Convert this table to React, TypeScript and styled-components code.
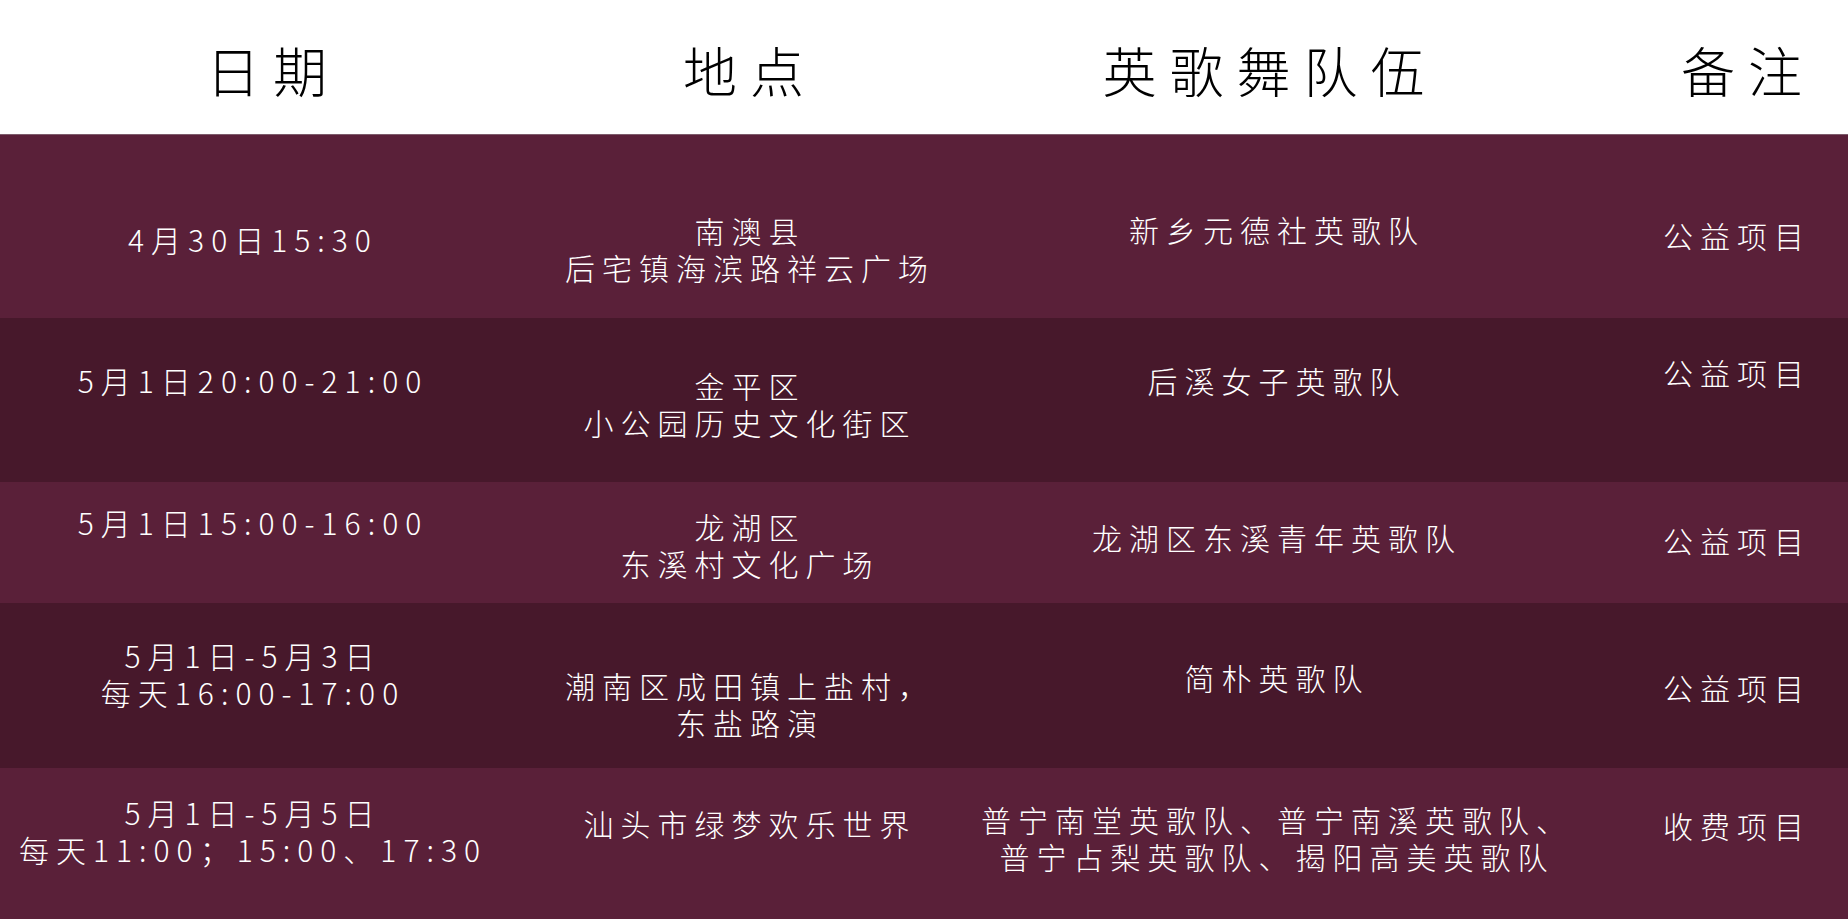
import { createGlobalStyle, styled } from "styled-components"

const GlobalStyle = createGlobalStyle`
  html, body {
    margin: 0;
    padding: 0;
    background: #5a2039;
  }
  body {
    font-family: "Noto Sans CJK SC", "Noto Sans", sans-serif;
  }
`

type Row = {
  height: number
  dark: boolean
  date: string[]
  place: string[]
  team: string[]
  note: string
  tops: [number, number, number, number]
}

const rows: Row[] = [
  {
    height: 183,
    dark: false,
    date: ["4月30日15:30"],
    place: ["南澳县", "后宅镇海滨路祥云广场"],
    team: ["新乡元德社英歌队"],
    note: "公益项目",
    tops: [86, 77, 76, 82],
  },
  {
    height: 164,
    dark: true,
    date: ["5月1日20:00-21:00"],
    place: ["金平区", "小公园历史文化街区"],
    team: ["后溪女子英歌队"],
    note: "公益项目",
    tops: [44, 49, 44, 36],
  },
  {
    height: 121,
    dark: false,
    date: ["5月1日15:00-16:00"],
    place: ["龙湖区", "东溪村文化广场"],
    team: ["龙湖区东溪青年英歌队"],
    note: "公益项目",
    tops: [22, 26, 37, 40],
  },
  {
    height: 165,
    dark: true,
    date: ["5月1日-5月3日", "每天16:00-17:00"],
    place: ["潮南区成田镇上盐村，", "东盐路演"],
    team: ["简朴英歌队"],
    note: "公益项目",
    tops: [34, 64, 56, 66],
  },
  {
    height: 151,
    dark: false,
    date: ["5月1日-5月5日", "每天11:00；15:00、17:30"],
    place: ["汕头市绿梦欢乐世界"],
    team: ["普宁南堂英歌队、普宁南溪英歌队、", "普宁占梨英歌队、揭阳高美英歌队"],
    note: "收费项目",
    tops: [26, 37, 33, 39],
  },
]

const App = () => {
  return (
    <Page>
      <GlobalStyle />
      <Header>
        <HeadCell>日期</HeadCell>
        <HeadCell>地点</HeadCell>
        <HeadCell>英歌舞队伍</HeadCell>
        <HeadCell $pad={62}>备注</HeadCell>
      </Header>
      {rows.map((row, index) => (
        <TableRow key={index} $dark={row.dark} $height={row.height}>
          <Cell $top={row.tops[0]}>
            {row.date.map((line, i) => (
              <Line key={i}>{line}</Line>
            ))}
          </Cell>
          <Cell $top={row.tops[1]}>
            {row.place.map((line, i) => (
              <Line key={i}>{line}</Line>
            ))}
          </Cell>
          <Cell $top={row.tops[2]}>
            {row.team.map((line, i) => (
              <Line key={i}>{line}</Line>
            ))}
          </Cell>
          <Cell $top={row.tops[3]} $pad={66}>
            <Line>{row.note}</Line>
          </Cell>
        </TableRow>
      ))}
    </Page>
  )
}

const Page = styled.div`
  width: 1848px;
  display: flex;
  flex-direction: column;
`

const Header = styled.header`
  display: grid;
  grid-template-columns: 546px 408px 632px 1fr;
  align-items: center;
  height: 135px;
  box-sizing: border-box;
  padding-top: 6px;
  background: #ffffff;
  border-bottom: 1px solid #7d5b6b;
`

const HeadCell = styled.div<{ $pad?: number }>`
  padding-left: ${({ $pad }) => $pad ?? 0}px;
  text-align: center;
  color: #000;
  font-size: 54px;
  font-weight: 300;
  letter-spacing: 13px;
  line-height: 1;
  white-space: nowrap;
`

const TableRow = styled.div<{ $dark: boolean; $height: number }>`
  display: grid;
  grid-template-columns: 506px 488px 566px 1fr;
  align-items: start;
  height: ${({ $height }) => $height}px;
  box-sizing: border-box;
  background: ${({ $dark }) => ($dark ? "#47182b" : "#5a2039")};
`

const Cell = styled.div<{ $top: number; $pad?: number }>`
  display: flex;
  flex-direction: column;
  align-items: center;
  padding-top: ${({ $top }) => $top}px;
  padding-left: ${({ $pad }) => $pad ?? 0}px;
  color: #ffffff;
  font-size: 30px;
  font-weight: 300;
  letter-spacing: 7px;
  line-height: 37px;
`

const Line = styled.div`
  white-space: nowrap;
`

export default App
